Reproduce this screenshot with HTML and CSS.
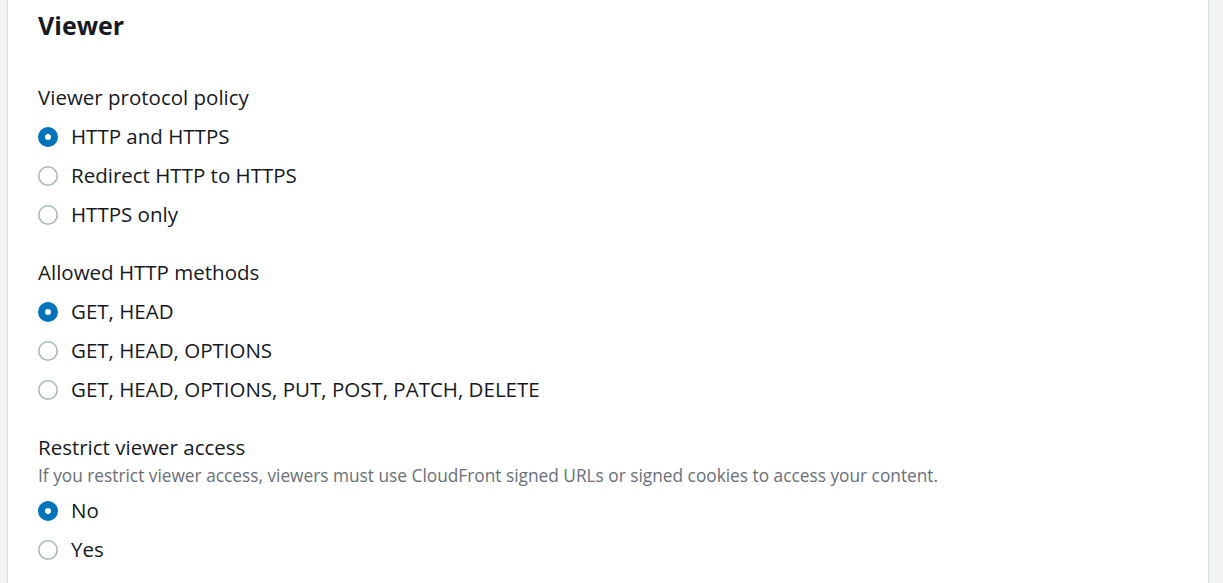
FILE: index.html
```html
<!DOCTYPE html>
<html lang="en">
<head>
<meta charset="utf-8">
<title>Viewer</title>
<link rel="stylesheet" href="styles.css">
</head>
<body>
<div class="page">
  <section class="card">
    <h2 class="card-title">Viewer</h2>

    <div class="field first">
      <div class="field-label">Viewer protocol policy</div>
      <div class="radios">
        <label class="radio"><svg class="radio-icon checked" viewBox="0 0 100 100"><circle cx="50" cy="50" r="46"/><circle class="dot" cx="50" cy="50" r="15"/></svg><span>HTTP and HTTPS</span></label>
        <label class="radio"><svg class="radio-icon" viewBox="0 0 100 100"><circle cx="50" cy="50" r="46"/></svg><span>Redirect HTTP to HTTPS</span></label>
        <label class="radio"><svg class="radio-icon" viewBox="0 0 100 100"><circle cx="50" cy="50" r="46"/></svg><span>HTTPS only</span></label>
      </div>
    </div>

    <div class="field">
      <div class="field-label">Allowed HTTP methods</div>
      <div class="radios">
        <label class="radio"><svg class="radio-icon checked" viewBox="0 0 100 100"><circle cx="50" cy="50" r="46"/><circle class="dot" cx="50" cy="50" r="15"/></svg><span>GET, HEAD</span></label>
        <label class="radio"><svg class="radio-icon" viewBox="0 0 100 100"><circle cx="50" cy="50" r="46"/></svg><span>GET, HEAD, OPTIONS</span></label>
        <label class="radio"><svg class="radio-icon" viewBox="0 0 100 100"><circle cx="50" cy="50" r="46"/></svg><span>GET, HEAD, OPTIONS, PUT, POST, PATCH, DELETE</span></label>
      </div>
    </div>

    <div class="field">
      <div class="field-label">Restrict viewer access</div>
      <div class="field-desc">If you restrict viewer access, viewers must use CloudFront signed URLs or signed cookies to access your content.</div>
      <div class="radios after-desc">
        <label class="radio"><svg class="radio-icon checked" viewBox="0 0 100 100"><circle cx="50" cy="50" r="46"/><circle class="dot" cx="50" cy="50" r="15"/></svg><span>No</span></label>
        <label class="radio"><svg class="radio-icon" viewBox="0 0 100 100"><circle cx="50" cy="50" r="46"/></svg><span>Yes</span></label>
      </div>
    </div>
  </section>
</div>
</body>
</html>
```

FILE: styles.css
```css
html, body {
  margin: 0;
  padding: 0;
  background: #f2f3f3;
  height: 100%;
}

body {
  font-family: "Open Sans", "Noto Sans", sans-serif;
  color: #16191f;
}

.page {
  padding: 0 14px 0 7px;
  height: 100%;
  box-sizing: border-box;
}

.card {
  background: #ffffff;
  border-left: 1px solid #d5dbdb;
  border-right: 1px solid #d5dbdb;
  padding: 10px 30px 0 30px;
  height: 100%;
  box-sizing: border-box;
}

.card-title {
  margin: 0;
  font-size: 25px;
  line-height: 30px;
  font-weight: 700;
}

.field {
  margin-top: 33px;
}

.field.first {
  margin-top: 45px;
}

.field-label {
  font-size: 20.5px;
  line-height: 24px;
}

.field-desc {
  margin-top: 6px;
  font-size: 17.3px;
  line-height: 22px;
  color: #687078;
}

.radios {
  display: flex;
  flex-direction: column;
  gap: 15px;
  margin-top: 16px;
}

.radios.after-desc {
  margin-top: 12px;
}

.radio {
  display: flex;
  align-items: center;
  gap: 13px;
  height: 24px;
  font-size: 20.5px;
  line-height: 24px;
}

.radio span {
  padding-bottom: 2px;
}

.radio-icon {
  width: 20px;
  height: 20px;
  flex: none;
}

.radio-icon circle {
  fill: #ffffff;
  stroke: #aab7b8;
  stroke-width: 8;
}

.radio-icon.checked circle {
  stroke: #0073bb;
}

.radio-icon.checked circle:first-child {
  fill: #0073bb;
}

.radio-icon.checked .dot {
  fill: #ffffff;
  stroke: none;
}
```
